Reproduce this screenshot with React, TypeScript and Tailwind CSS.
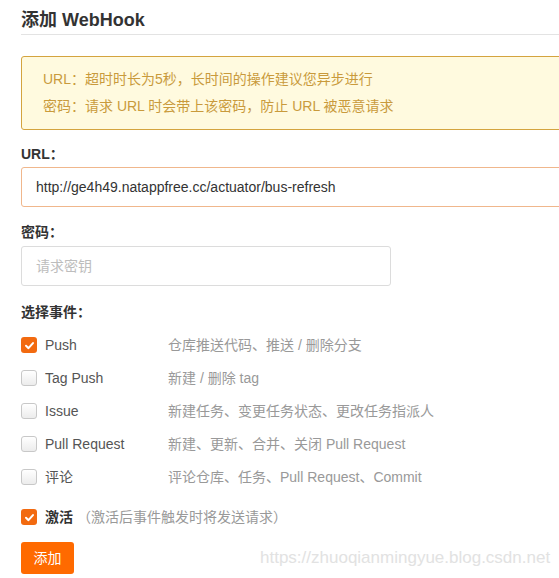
import React, { useState } from 'react';

const FONT = "font-['Liberation_Sans','Noto_Sans_CJK_SC',sans-serif]";

interface EventItem {
  key: string;
  label: string;
  desc: string;
}

const events: EventItem[] = [
  { key: 'push', label: 'Push', desc: '仓库推送代码、推送 / 删除分支' },
  { key: 'tag', label: 'Tag Push', desc: '新建 / 删除 tag' },
  { key: 'issue', label: 'Issue', desc: '新建任务、变更任务状态、更改任务指派人' },
  { key: 'pr', label: 'Pull Request', desc: '新建、更新、合并、关闭 Pull Request' },
  { key: 'comment', label: '评论', desc: '评论仓库、任务、Pull Request、Commit' },
];

const CheckBox: React.FC<{ checked: boolean; onChange: () => void }> = ({ checked, onChange }) => (
  <button
    type="button"
    onClick={onChange}
    className={
      checked
        ? 'w-4 h-4 rounded-[3px] bg-[#f26a10] flex items-center justify-center shrink-0'
        : 'w-4 h-4 rounded-[3px] border border-[#c8c8c8] bg-gradient-to-b from-white to-[#ececec] shrink-0'
    }
  >
    {checked && (
      <svg viewBox="0 0 12 12" className="w-[11px] h-[11px]">
        <path d="M2.2 6.3 L4.9 8.9 L9.8 3.4" fill="none" stroke="white" strokeWidth="2.2" strokeLinecap="round" strokeLinejoin="round" />
      </svg>
    )}
  </button>
);

const App: React.FC = () => {
  const [selected, setSelected] = useState<Record<string, boolean>>({ push: true });
  const [active, setActive] = useState(true);
  const [url, setUrl] = useState('http://ge4h49.natappfree.cc/actuator/bus-refresh');
  const [secret, setSecret] = useState('');

  return (
    <div className={`relative w-[559px] h-[578px] overflow-hidden bg-white ${FONT}`}>
      <div className="w-[640px] pl-[21px] pt-[8px]">
        {/* Header */}
        <h2 className="text-[18px] leading-6 font-bold text-[#333]">添加 WebHook</h2>
        <div className="mt-[2px] h-px bg-[#e3e3e3]" />

        {/* Notice */}
        <div className="mt-[21px] h-[74px] rounded-[3px] border border-[#d4a43f] bg-[#fffadf] pl-[21px] pt-[12px] text-[14px] text-[#c99a3c]">
          <p className="leading-[20px]">URL：超时时长为5秒，长时间的操作建议您异步进行</p>
          <p className="mt-[7px] leading-[20px]">密码：请求 URL 时会带上该密码，防止 URL 被恶意请求</p>
        </div>

        {/* URL */}
        <label className="block mt-[14px] text-[14px] leading-5 font-bold text-[#333]">URL：</label>
        <input
          value={url}
          onChange={(e) => setUrl(e.target.value)}
          className="mt-[3px] block w-full h-10 rounded-[3px] border border-[#f0b78c] px-[14px] text-[14px] text-[#333] outline-none"
        />

        {/* Secret */}
        <label className="block mt-[15px] text-[14px] leading-5 font-bold text-[#333]">密码：</label>
        <input
          value={secret}
          onChange={(e) => setSecret(e.target.value)}
          placeholder="请求密钥"
          className="mt-[4px] block w-[370px] h-10 rounded-[3px] border border-[#dcdcdc] px-[14px] text-[14px] text-[#333] placeholder:text-[#bdbdbd] outline-none"
        />

        {/* Events */}
        <label className="block mt-[16px] text-[14px] leading-5 font-bold text-[#333]">选择事件：</label>
        <div className="mt-[13px] flex flex-col gap-[13px]">
          {events.map((ev) => (
            <div key={ev.key} className="flex items-center h-5 text-[14px]">
              <CheckBox
                checked={!!selected[ev.key]}
                onChange={() => setSelected((s) => ({ ...s, [ev.key]: !s[ev.key] }))}
              />
              <span className="ml-2 w-[123px] text-[#555]">{ev.label}</span>
              <span className="text-[#999]">{ev.desc}</span>
            </div>
          ))}
        </div>

        {/* Active */}
        <div className="mt-[20px] flex items-center h-5 text-[14px]">
          <CheckBox checked={active} onChange={() => setActive((a) => !a)} />
          <span className="ml-2 font-bold text-[#333]">激活</span>
          <span className="ml-1 text-[#999]">（激活后事件触发时将发送请求）</span>
        </div>

        <button
          type="button"
          className="mt-[15px] w-[53px] h-8 rounded-[3px] bg-[#ff6a00] text-[14px] text-white"
        >
          添加
        </button>
      </div>

      <span className="absolute left-[260px] top-[545px] text-[17px] text-[#e2e2e2] font-['Liberation_Sans',sans-serif]">
        https://zhuoqianmingyue.blog.csdn.net
      </span>
    </div>
  );
};

export default App;
